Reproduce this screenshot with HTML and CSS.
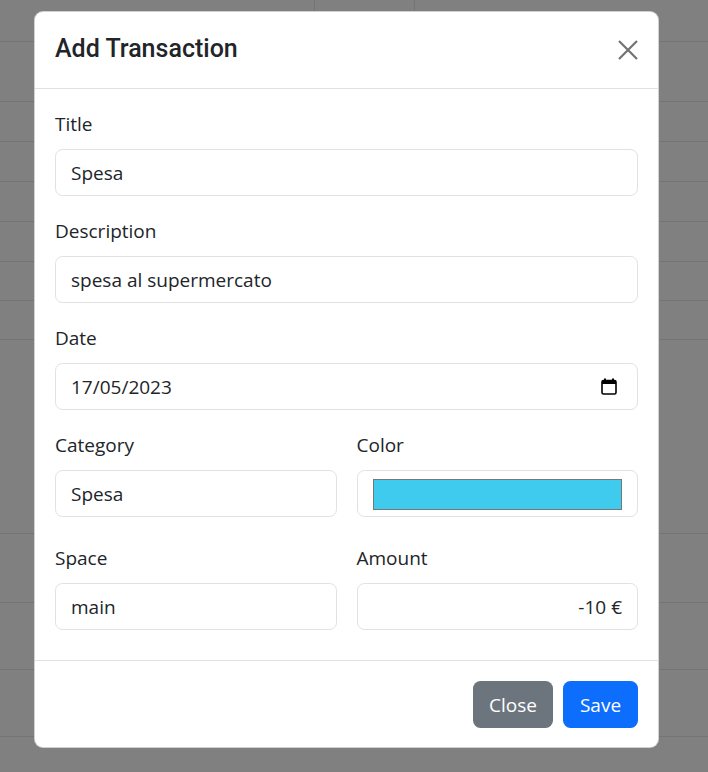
FILE: index.html
```html
<!DOCTYPE html>
<html lang="en">
<head>
<meta charset="utf-8">
<title>Add Transaction</title>
<link rel="stylesheet" href="styles.css">
</head>
<body>
<div class="page">
  <div class="bg-row bg-top"><div class="cell c1"></div><div class="cell c2"></div><div class="cell c3"></div></div>
  <div class="bg-row h60"></div>
  <div class="bg-row h40"></div>
  <div class="bg-row h40"></div>
  <div class="bg-row h40"></div>
  <div class="bg-row h40"></div>
  <div class="bg-row h39"></div>
  <div class="bg-row h39"></div>
  <div class="bg-row h194"></div>
  <div class="bg-row h69"></div>
  <div class="bg-row h67"></div>
  <div class="bg-row h67"></div>
</div>

<div class="modal">
  <div class="modal-header">
    <h4 class="modal-title">Add Transaction</h4>
    <button class="btn-close" aria-label="Close">
      <svg viewBox="0 0 20 20" width="20" height="20"><path d="M1 1 L19 19 M19 1 L1 19" stroke="currentColor" stroke-width="2.2" fill="none"/></svg>
    </button>
  </div>
  <div class="modal-body">
    <div class="group">
      <label class="label">Title</label>
      <div class="control">Spesa</div>
    </div>
    <div class="group">
      <label class="label">Description</label>
      <div class="control">spesa al supermercato</div>
    </div>
    <div class="group">
      <label class="label">Date</label>
      <div class="control control-date">
        <span>17/05/2023</span>
        <svg class="cal" viewBox="0 0 16 17" width="16" height="17"><path d="M4 0.5 V3 M12 0.5 V3" stroke="#000" stroke-width="2" fill="none"/><rect x="1" y="2.5" width="14" height="13.5" rx="1.5" ry="1.5" fill="none" stroke="#000" stroke-width="1.6"/><rect x="1" y="2.5" width="14" height="3.5" fill="#000"/></svg>
      </div>
    </div>
    <div class="row row-3">
      <div class="col">
        <label class="label">Category</label>
        <div class="control">Spesa</div>
      </div>
      <div class="col">
        <label class="label">Color</label>
        <div class="control control-color"><div class="swatch"></div></div>
      </div>
    </div>
    <div class="row row-4">
      <div class="col">
        <label class="label">Space</label>
        <div class="control">main</div>
      </div>
      <div class="col">
        <label class="label">Amount</label>
        <div class="control control-amount">-10 €</div>
      </div>
    </div>
  </div>
  <div class="modal-footer">
    <button class="btn btn-secondary">Close</button>
    <button class="btn btn-primary">Save</button>
  </div>
</div>
</body>
</html>
```

FILE: styles.css
```css
* { box-sizing: border-box; }
html, body { margin: 0; padding: 0; }
body {
  background: #808080;
  font-family: "Open Sans", "Noto Sans", sans-serif;
  color: #212529;
  width: 708px;
  height: 772px;
  overflow: hidden;
  position: relative;
}

.page { width: 708px; }
.bg-row { border-bottom: 1px solid #747474; }
.bg-top { height: 42px; display: grid; grid-template-columns: 315px 100px 1fr; }
.bg-top .cell { border-right: 1px solid #747474; }
.bg-top .c3 { border-right: none; }
.h60 { height: 60px; }
.h40 { height: 40px; }
.h39 { height: 39px; }
.h194 { height: 194px; }
.h69 { height: 69px; }
.h67 { height: 67px; }

.modal {
  position: absolute;
  left: 34px;
  top: 11px;
  width: 625px;
  background: #fff;
  border: 1px solid rgba(0,0,0,0.18);
  border-radius: 9px;
  display: flex;
  flex-direction: column;
}

.modal-header {
  height: 77px;
  padding: 0 20px;
  display: flex;
  align-items: center;
  justify-content: space-between;
  border-bottom: 1px solid #dee2e6;
}
.modal-title {
  margin: 0;
  font-family: Roboto, "Open Sans", sans-serif;
  font-size: 25px;
  font-weight: 500;
  line-height: 1.2;
  padding-bottom: 2px;
}
.btn-close {
  border: 0;
  background: transparent;
  padding: 0;
  width: 20px;
  height: 20px;
  color: #737373;
  display: flex;
  margin-right: 0;
}

.modal-body {
  padding: 20px 20px 20px;
}
.group { margin-bottom: 20px; }
.label {
  display: block;
  font-size: 19px;
  line-height: 30px;
  margin-bottom: 10px;
}
.control {
  height: 47px;
  border: 1px solid #dee2e6;
  border-radius: 7.5px;
  padding: 0 15px;
  font-size: 19px;
  display: flex;
  align-items: center;
  background: #fff;
}
.control-date { justify-content: space-between; padding-right: 20px; }
.cal { display: block; }
.control-color { padding: 0 15px; }
.swatch {
  flex: 1;
  height: 31px;
  background: #3fcbee;
  border: 1px solid #777;
  margin-top: 1px;
}
.control-amount { justify-content: flex-end; }

.row {
  display: grid;
  grid-template-columns: 1fr 1fr;
  column-gap: 20px;
}
.row-3 { margin-bottom: 26px; }
.row-4 { margin-bottom: 10px; }

.modal-footer {
  border-top: 1px solid #dee2e6;
  padding: 20px 20px 19px;
  display: flex;
  justify-content: flex-end;
  gap: 10px;
}
.btn {
  height: 47px;
  border: 0;
  border-radius: 7.5px;
  color: #fff;
  font-family: inherit;
  font-size: 19px;
  font-weight: 500;
  padding: 0;
}
.btn-secondary { background: #6c757d; width: 80px; }
.btn-primary { background: #0d6efd; width: 75px; }
```
